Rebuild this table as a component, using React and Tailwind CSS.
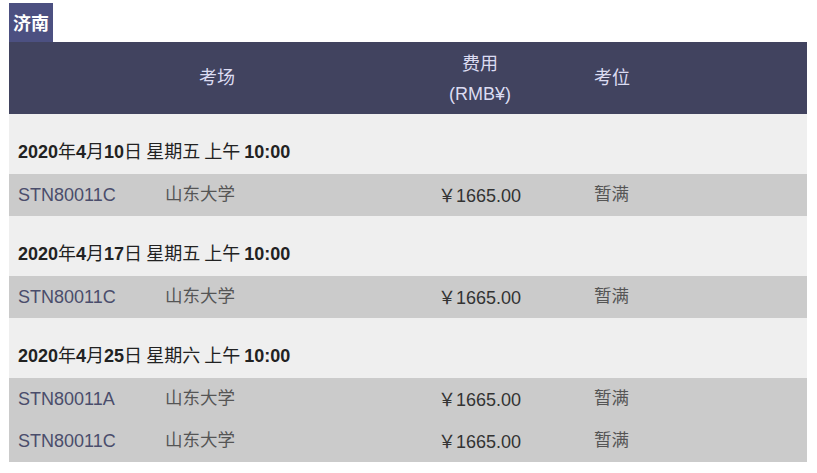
const sessions = [
  {
    date: ['2020', '年', '4', '月', '10', '日 星期五 上午 ', '10:00'],
    rows: [{ code: 'STN80011C', venue: '山东大学', fee: '1665.00', seat: '暂满' }],
  },
  {
    date: ['2020', '年', '4', '月', '17', '日 星期五 上午 ', '10:00'],
    rows: [{ code: 'STN80011C', venue: '山东大学', fee: '1665.00', seat: '暂满' }],
  },
  {
    date: ['2020', '年', '4', '月', '25', '日 星期六 上午 ', '10:00'],
    rows: [
      { code: 'STN80011A', venue: '山东大学', fee: '1665.00', seat: '暂满' },
      { code: 'STN80011C', venue: '山东大学', fee: '1665.00', seat: '暂满' },
    ],
  },
]

const latin = "font-['Liberation_Sans','Noto_Sans_CJK_SC',sans-serif]"
const cjk = "font-['Noto_Sans_CJK_SC',sans-serif]"

export default function App() {
  return (
    <div className={`min-h-screen bg-white pt-[3px] pl-[9px] w-[817px] ${latin}`}>
      {/* City tab */}
      <div className="flex">
        <div className={`bg-[#4c5081] text-white font-bold text-[18px] h-[39px] w-[44px] flex items-center justify-center ${cjk}`}>
          济南
        </div>
      </div>

      <div className="w-[798px]">
        {/* Header */}
        <div className="bg-[#41435f] h-[72px] flex items-center text-[#dcdcf2] text-[18px]">
          <div className={`w-[416px] text-center pb-[3px] ${cjk}`}>考场</div>
          <div className="w-[110px] text-center leading-[30px]">
            <div className={`${cjk} pb-[1px]`}>费用</div>
            <div className={`${latin} pt-[1px]`}>(RMB¥)</div>
          </div>
          <div className={`pl-[59px] pb-[3px] ${cjk}`}>考位</div>
        </div>

        {sessions.map((s, i) => (
          <div key={i}>
            <div className="bg-[#efefef] h-[60px] pt-[24px] pl-[9px] text-[18px] leading-[24px] text-[#222] font-bold">
              <span>{s.date[0]}</span>
              <span className={`font-normal ${cjk}`}>{s.date[1]}</span>
              <span>{s.date[2]}</span>
              <span className={`font-normal ${cjk}`}>{s.date[3]}</span>
              <span>{s.date[4]}</span>
              <span className={`font-normal ${cjk}`}>{s.date[5]}</span>
              <span>{s.date[6]}</span>
            </div>
            {s.rows.map((r, j) => (
              <div key={j} className="bg-[#cbcbcb] h-[42px] grid grid-cols-[147px_273px_156px_1fr] items-center text-[18px] leading-[24px]">
                <div className="pl-[9px] text-[#4a4d6b]">{r.code}</div>
                <div className={`pl-[9px] pb-[4px] text-[17.5px] text-[#555] ${cjk}`}>{r.venue}</div>
                <div className="pl-[9px] text-[#333]">
                  <span className={cjk}>￥</span>{r.fee}
                </div>
                <div className={`pl-[9px] pb-[4px] text-[17.5px] text-[#555] ${cjk}`}>{r.seat}</div>
              </div>
            ))}
          </div>
        ))}
      </div>
    </div>
  )
}
